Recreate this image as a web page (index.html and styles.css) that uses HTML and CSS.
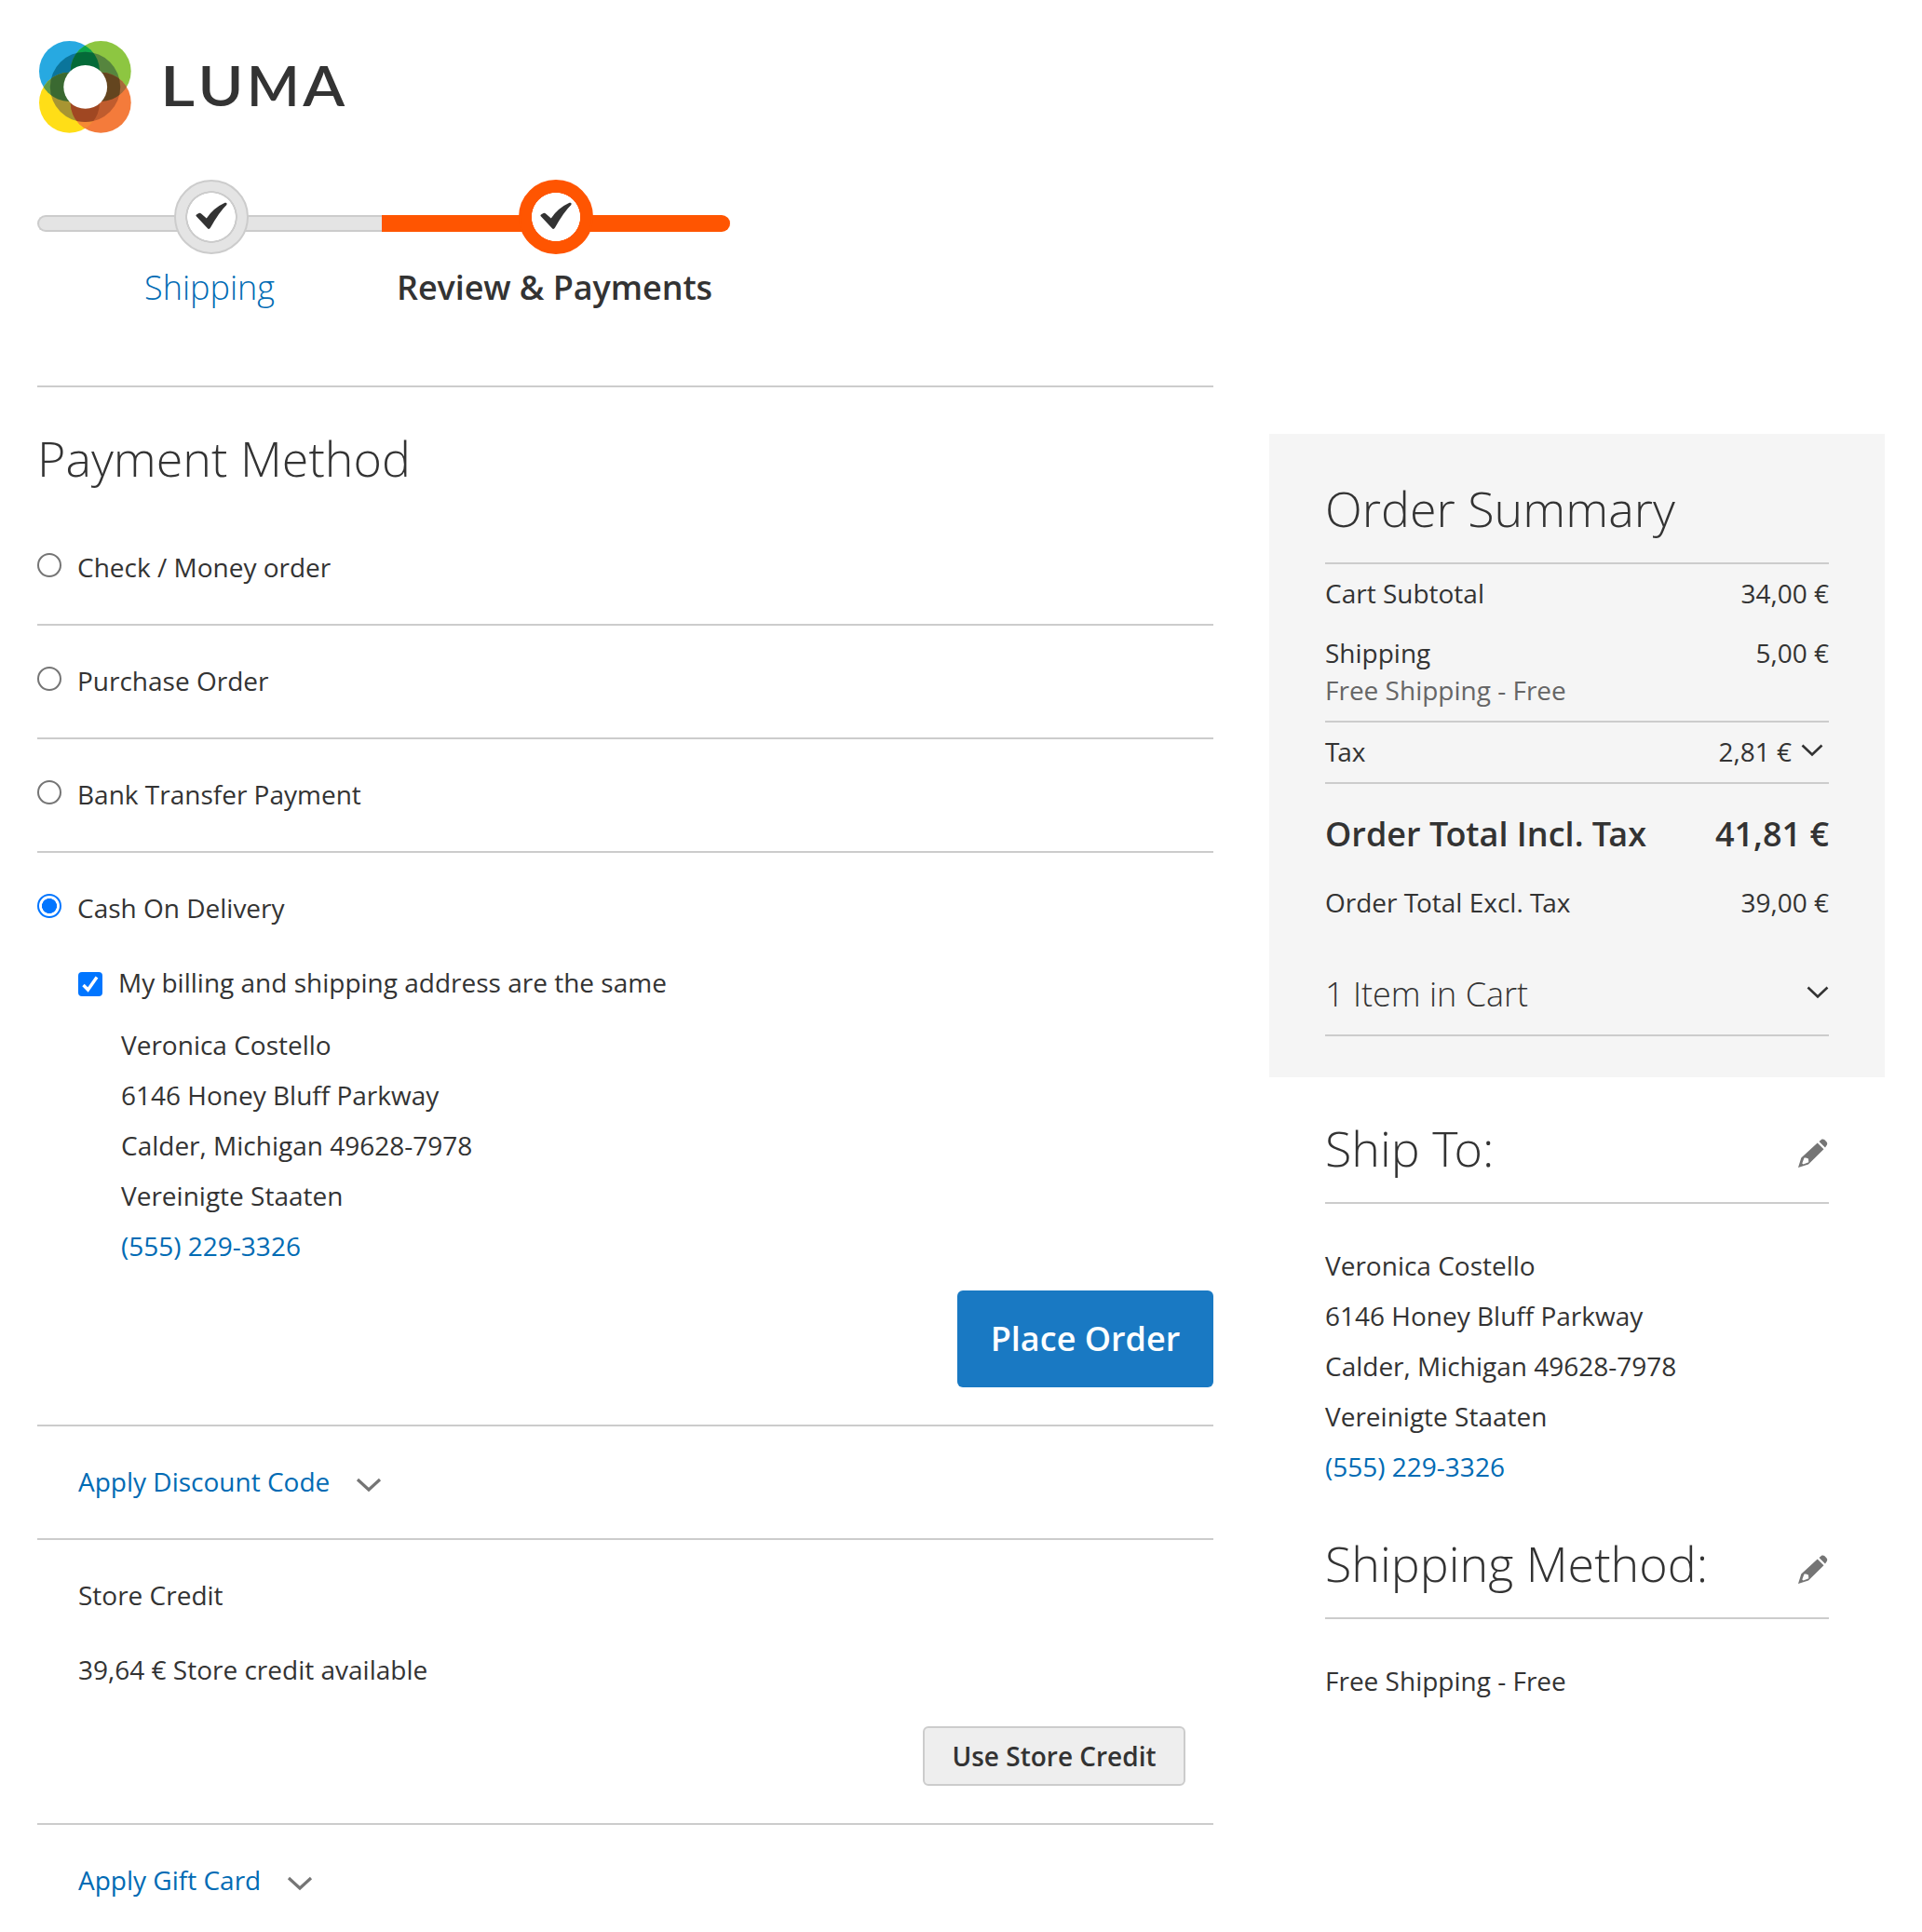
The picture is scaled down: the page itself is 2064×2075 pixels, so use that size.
FILE: index.html
```html
<!DOCTYPE html>
<html lang="en">
<head>
<meta charset="utf-8">
<title>Checkout</title>
<link rel="stylesheet" href="styles.css">
</head>
<body>
<svg class="defs" width="0" height="0" aria-hidden="true">
  <symbol id="check" viewBox="0 0 34 30"><path d="M.8 15.200 Q0 14.300 1 13.500 L3.500 12 Q4.600 11.300 5.800 12.300 L11.800 17.500 Q19 6.500 31.500 .8 Q34.200 0 33.400 3 Q25.500 10.500 16 27.500 Q14.500 30 12.700 28 Z" fill="#333"/></symbol>
  <symbol id="pencil" viewBox="0 0 32 32"><path fill="#757575" fill-rule="evenodd" d="M22.500 3 L25.500 .6 Q27 0 28.500 1.200 L30.600 3.600 Q31.800 5 31 6.500 L29 9.500 Z M20.700 4.500 L27.500 11.200 L11 27.500 L0 31 L3.300 20.500 Z M6.500 20.500 L4.300 26.500 L5.500 27.600 L11.300 25.300 L11 21.500 L8.500 20.500 Z"/></symbol>
</svg>
<header class="header">
  <svg class="logo" width="350" height="110" viewBox="30 38 350 110" role="img" aria-label="Luma">
    <defs>
      <clipPath id="cb"><circle cx="74.500" cy="76.500" r="32.500"/></clipPath>
      <clipPath id="co"><circle cx="108.200" cy="110.200" r="32.500"/></clipPath>
      <clipPath id="ring"><circle cx="91.500" cy="93.400" r="37.700"/></clipPath>
      <g id="bg"><circle cx="108.200" cy="76.500" r="32.500" clip-path="url(#cb)"/></g>
      <g id="by"><circle cx="74.500" cy="110.200" r="32.500" clip-path="url(#cb)"/></g>
      <g id="og"><circle cx="108.200" cy="76.500" r="32.500" clip-path="url(#co)"/></g>
      <g id="oy"><circle cx="74.500" cy="110.200" r="32.500" clip-path="url(#co)"/></g>
    </defs>
    <circle cx="74.500" cy="76.500" r="32.500" fill="#27a9e1"/>
    <circle cx="108.200" cy="76.500" r="32.500" fill="#8dc641"/>
    <circle cx="74.500" cy="110.200" r="32.500" fill="#ffde17"/>
    <circle cx="108.200" cy="110.200" r="32.500" fill="#f47b3b"/>
    <use href="#bg" fill="#0ea64b"/><use href="#by" fill="#5e9a46"/><use href="#og" fill="#a7693a"/><use href="#oy" fill="#f58a34"/>
    <g clip-path="url(#ring)">
      <circle cx="74.500" cy="76.500" r="32.500" fill="#0b759b"/>
      <circle cx="108.200" cy="76.500" r="32.500" fill="#56853e"/>
      <circle cx="74.500" cy="110.200" r="32.500" fill="#a89532"/>
      <circle cx="108.200" cy="110.200" r="32.500" fill="#c05c2e"/>
      <use href="#bg" fill="#046a38"/><use href="#by" fill="#3a6931"/><use href="#og" fill="#64451f"/><use href="#oy" fill="#a04722"/>
    </g>
    <circle cx="91.700" cy="93.400" r="23.400" fill="#fff"/>
    <text class="wordmark" y="114.300"><tspan x="172" textLength="37" lengthAdjust="spacingAndGlyphs">L</tspan><tspan x="212.500" textLength="49" lengthAdjust="spacingAndGlyphs">U</tspan><tspan x="265">M</tspan><tspan x="325.300" textLength="45" lengthAdjust="spacingAndGlyphs">A</tspan></text>
  </svg>
</header>

<ul class="progress">
  <li class="step done"><span class="dot"><svg width="34" height="30"><use href="#check"/></svg></span><span class="step-name">Shipping</span></li>
  <li class="step active"><span class="dot"><svg width="34" height="30"><use href="#check"/></svg></span><span class="step-name">Review &amp; Payments</span></li>
</ul>

<div class="columns">
  <main class="main">
    <h1 class="title">Payment Method</h1>
    <label class="method first"><input class="radio" type="radio" name="pay"><span>Check / Money order</span></label>
    <label class="method"><input class="radio" type="radio" name="pay"><span>Purchase Order</span></label>
    <label class="method"><input class="radio" type="radio" name="pay"><span>Bank Transfer Payment</span></label>
    <label class="method"><input class="radio" type="radio" name="pay" checked><span>Cash On Delivery</span></label>
    <div class="method-body">
      <label class="same"><span class="checkbox"><svg width="26" height="26" viewBox="0 0 26 26"><path d="M5.500 14 L10.500 19 L20 5.500" fill="none" stroke="#fff" stroke-width="3.400"/></svg></span><span>My billing and shipping address are the same</span></label>
      <address class="address billing">Veronica Costello<br>6146 Honey Bluff Parkway<br>Calder, Michigan 49628-7978<br>Vereinigte Staaten<br><a href="#">(555) 229-3326</a></address>
      <button class="place">Place Order</button>
    </div>
    <section class="option"><a href="#">Apply Discount Code</a><svg class="arrow" width="28" height="16" viewBox="0 0 28 16"><path d="M2 2 L14 13 L26 2" fill="none" stroke="#757575" stroke-width="3.200"/></svg></section>
    <section class="credit">
      <div>Store Credit</div>
      <div class="available">39,64 € Store credit available</div>
      <button class="use">Use Store Credit</button>
    </section>
    <section class="option"><a href="#">Apply Gift Card</a><svg class="arrow" width="28" height="16" viewBox="0 0 28 16"><path d="M2 2 L14 13 L26 2" fill="none" stroke="#757575" stroke-width="3.200"/></svg></section>
  </main>

  <aside class="side">
    <section class="summary">
      <h2 class="side-title">Order Summary</h2>
      <div class="row subtotal"><span>Cart Subtotal</span><span>34,00 €</span></div>
      <div class="row"><span>Shipping</span><span>5,00 €</span></div>
      <div class="note">Free Shipping - Free</div>
      <div class="row tax"><span><span class="kern">T</span>ax</span><span class="tax-value">2,81 €<svg width="24" height="14" viewBox="0 0 24 14"><path d="M1.500 1.500 L12 11.500 L22.500 1.500" fill="none" stroke="#333" stroke-width="2.600"/></svg></span></div>
      <div class="row total"><span>Order <span class="kern">T</span>otal Incl. <span class="kern">T</span>ax</span><span>41,81 €</span></div>
      <div class="row excl"><span>Order <span class="kern">T</span>otal Excl. <span class="kern">T</span>ax</span><span>39,00 €</span></div>
      <div class="row items"><span>1 Item in Cart</span><svg width="24" height="14" viewBox="0 0 24 14"><path d="M1.500 1.500 L12 11.500 L22.500 1.500" fill="none" stroke="#333" stroke-width="2.600"/></svg></div>
    </section>
    <section class="info">
      <h2 class="side-title ruled"><span>Ship <span class="kern">T</span>o:</span><svg width="32" height="32"><use href="#pencil"/></svg></h2>
      <address class="address">Veronica Costello<br>6146 Honey Bluff Parkway<br>Calder, Michigan 49628-7978<br>Vereinigte Staaten<br><a href="#">(555) 229-3326</a></address>
      <h2 class="side-title ruled second"><span>Shipping Method:</span><svg width="32" height="32"><use href="#pencil"/></svg></h2>
      <div class="ship-method">Free Shipping - Free</div>
    </section>
  </aside>
</div>
</body>
</html>
```
FILE: styles.css
```css
*, *::before { box-sizing: border-box; }
html { overflow: hidden; }
body {
  margin: 0;
  padding: 0 40px;
  height: 2075px;
  overflow: hidden;
  background: #fff;
  color: #333;
  font: 400 28px/40px "Open Sans", "Noto Sans", sans-serif;
}
a { color: #006bb4; text-decoration: none; }
svg { display: block; flex: none; }
.defs { position: absolute; }
h1, h2, ul { margin: 0; padding: 0; }
.kern { letter-spacing: -.08em; }

.header { height: 193px; padding-top: 38px; }
.logo { margin-left: -10px; }
.wordmark { font: 600 60.5px "Lato", sans-serif; fill: #333; }

.progress { display: flex; height: 221px; list-style: none; }
.step { width: 370px; display: flex; flex-direction: column; align-items: center; }
.step.active { width: 374px; }
.step::before {
  content: "";
  width: 100%;
  height: 18px;
  margin-top: 38px;
  background: #e4e4e4;
  border: 2px solid #ccc;
  border-right: 0;
  border-radius: 9px 0 0 9px;
}
.active::before { background: #ff5501; border-color: #ff5501; border-radius: 0 9px 9px 0; }
.dot {
  position: relative;
  width: 80px;
  height: 80px;
  margin-top: -56px;
  left: 2px;
  border: 2px solid #ccc;
  border-radius: 50%;
  background: radial-gradient(circle, #fff 0 25.500px, #ccc 26px 27.500px, #e4e4e4 28px);
  display: flex;
  align-items: center;
  justify-content: center;
}
.active .dot { left: 0; border-color: #ff5501; background: radial-gradient(circle, #fff 0 25.700px, #ff5501 26.300px); }
.dot svg { margin-top: -2px; }
.step-name { margin-top: 11px; font-size: 36px; line-height: 50px; font-weight: 300; color: #006bb4; }
.active .step-name { padding-right: 3px; letter-spacing: -.08px; font-weight: 600; color: #333; }

.columns { display: flex; gap: 60px; align-items: flex-start; }
.main { width: 1263px; border-top: 2px solid #ccc; }
.title { margin-top: 40px; font-size: 52px; line-height: 72px; font-weight: 300; }

.method { display: flex; gap: 17px; height: 122px; border-top: 2px solid #ccc; padding-top: 39px; }
.method.first { border: 0; height: 142px; padding-top: 61px; }
.radio {
  appearance: none;
  flex: none;
  width: 26px;
  height: 26px;
  margin: 5px 0 0;
  border: 2px solid #757575;
  border-radius: 50%;
}
.radio:checked { border-color: #0075ff; background: radial-gradient(circle, #0075ff 0 7.700px, #fff 8.300px); }
.method-body { height: 495px; padding-left: 44px; }
.same { display: flex; gap: 17px; margin-top: -1px; }
.checkbox { width: 26px; height: 26px; margin-top: 9px; border-radius: 4px; background: #0075ff; }
.address { font-style: normal; line-height: 54px; }
.billing { margin: 20px 0 0 46px; }
.place {
  display: block;
  width: 275px;
  height: 104px;
  margin: 21px 0 0 auto;
  padding: 0;
  border: 0;
  border-radius: 6px;
  background: #1979c3;
  color: #fff;
  font: 600 36px/50px "Open Sans", sans-serif;
}
.option { height: 122px; border-top: 2px solid #ccc; padding: 39px 0 0 44px; display: flex; gap: 28px; }
.arrow { margin-top: 16px; }
.credit { height: 306px; border-top: 2px solid #ccc; padding: 39px 30px 0 44px; }
.available { margin-top: 40px; }
.use {
  display: block;
  width: 282px;
  height: 64px;
  margin: 41px 0 0 auto;
  padding: 0 0 1px;
  border: 2px solid #ccc;
  border-radius: 6px;
  background: #eee;
  color: #333;
  font: 600 28px/40px "Open Sans", sans-serif;
}

.side { width: 661px; padding-top: 52px; }
.summary { height: 691px; padding: 44px 60px 0; background: #f5f5f5; }
.side-title { font-size: 52px; line-height: 72px; font-weight: 300; }
.row { display: flex; justify-content: space-between; }
.subtotal { height: 77px; margin-top: 22px; border-top: 2px solid #ccc; padding-top: 11px; }
.note { color: #666; }
.tax { margin-top: 13px; height: 68px; border: solid #ccc; border-width: 2px 0; padding-top: 11px; }
.tax-value { display: flex; gap: 10px; padding-right: 6px; }
.tax-value svg { margin-top: 12px; }
.total { margin-top: 29px; font-size: 36px; line-height: 50px; font-weight: 600; }
.excl { margin-top: 28px; }
.items { margin-top: 54px; height: 70px; border-bottom: 2px solid #ccc; font-size: 36px; line-height: 50px; font-weight: 300; }
.items svg { margin-top: 16px; }
.info { padding: 40px 60px 0; }
.ruled { display: flex; justify-content: space-between; height: 96px; border-bottom: 2px solid #ccc; }
.ruled svg { margin: 26px 1px 0 0; }
.info .address { margin-top: 39px; }
.second { margin-top: 41px; }
.second svg { margin-top: 27px; }
.ship-method { margin-top: 46px; }
```
